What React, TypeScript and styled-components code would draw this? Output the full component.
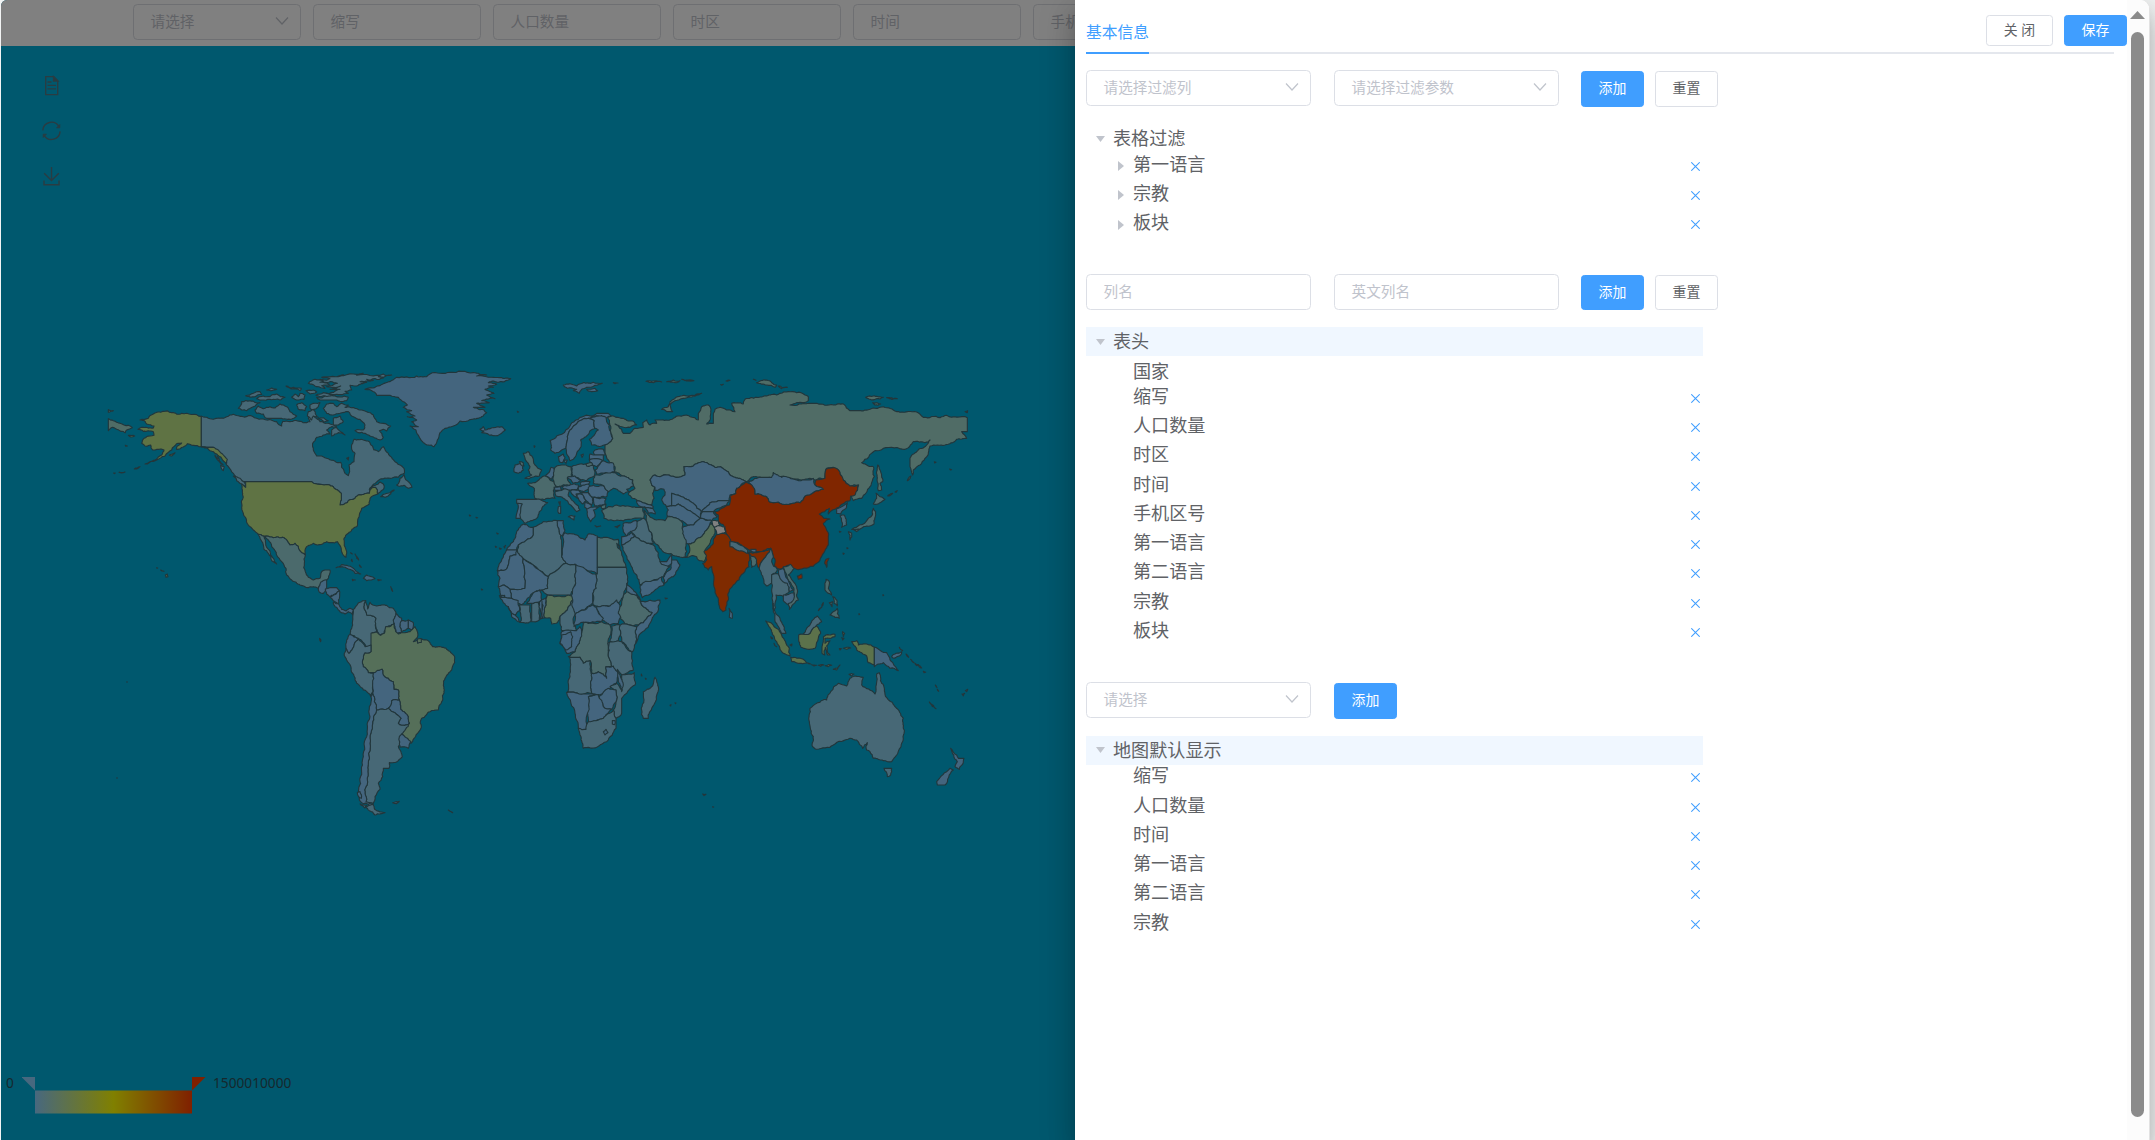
import React from "react";
import styled, { createGlobalStyle, css } from "styled-components";

const GlobalStyle = createGlobalStyle`
  * { box-sizing: border-box; }
  html, body { margin: 0; padding: 0; }
  body {
    background: #f7f7f7;
    overflow: hidden;
    font-family: "Noto Sans", "Noto Sans CJK SC", sans-serif;
  }
`;

const Page = styled.div`
  display: flex;
  width: 2155px;
  height: 1140px;
  padding-left: 1px;
  background: #f2f4f4;
  overflow: hidden;
`;

const MapSide = styled.main`
  display: flex;
  flex-direction: column;
  width: 1074px;
  height: 1140px;
  flex: none;
  background: #00586e;
  border-top-left-radius: 6px;
  overflow: hidden;
`;

const FilterBar = styled.div`
  display: flex;
  gap: 12px;
  height: 46px;
  flex: none;
  padding: 4px 0 0 132px;
  background: #808080;
`;

const Field = styled.div<{ $dim?: boolean; $w: number }>`
  display: flex;
  align-items: center;
  justify-content: space-between;
  flex: none;
  width: ${(p) => p.$w}px;
  height: 36px;
  padding: 0 11px 2px 16.5px;
  border: 1px solid ${(p) => (p.$dim ? "#6e6f72" : "#dcdfe6")};
  border-radius: 4.5px;
  background: ${(p) => (p.$dim ? "#808080" : "#fff")};
  color: ${(p) => (p.$dim ? "#606266" : "#bfc3cc")};
  font-size: 14.63px;
  line-height: 34px;
  white-space: nowrap;
`;

const Canvas = styled.div`
  position: relative;
  flex: 1;
`;

const Toolbox = styled.div`
  position: absolute;
  left: 40px;
  top: 28px;
  display: flex;
  flex-direction: column;
  gap: 23px;
  svg { display: block; }
`;

const WorldSvg = styled.svg`
  display: block;
`;

const Legend = styled.div`
  position: absolute;
  left: 5px;
  top: 1026px;
  display: flex;
  align-items: flex-start;
  color: #16282d;
  font-size: 13.7px;
  line-height: 21px;
`;

const LegendMin = styled.span`
  width: 16px;
`;
const LegendMax = styled.span`
  padding-left: 7px;
`;
const LegendScale = styled.svg`
  display: block;
  margin-top: 5px;
`;

const Drawer = styled.aside`
  display: flex;
  flex: none;
  width: 1075px;
  height: 1140px;
  background: #fff;
  border-right: 1px solid #e2e2e2;
  border-top-right-radius: 9px;
  box-shadow: 0 9px 11px -6px rgba(0, 0, 0, 0.2), 0 18px 27px 2px rgba(0, 0, 0, 0.14),
    0 7px 34px 6px rgba(0, 0, 0, 0.12);
  position: relative;
`;

const Content = styled.div`
  width: 1052px;
  flex: none;
  padding-left: 11px;
`;

const Head = styled.header`
  display: flex;
  justify-content: space-between;
  height: 52px;
`;

const Tab = styled.div`
  padding-top: 20px;
  color: #409eff;
  font-size: 15.75px;
  line-height: 24px;
`;

const HeadButtons = styled.div`
  display: flex;
  gap: 11px;
  padding-top: 15px;
`;

const TabLine = styled.div`
  width: 1028px;
  height: 2px;
  background: #e4e7ed;
`;
const TabActive = styled.div`
  width: 63px;
  height: 2px;
  background: #409eff;
`;

const Button = styled.button<{ $primary?: boolean; $h: number; $w?: number }>`
  display: flex;
  align-items: center;
  justify-content: center;
  width: ${(p) => p.$w ?? 63}px;
  height: ${(p) => p.$h}px;
  padding: 0 0 2px;
  border: 1px solid #dcdfe6;
  border-radius: 3.4px;
  background: #fff;
  color: #606266;
  font: 400 13.9px/20px "Noto Sans", "Noto Sans CJK SC", sans-serif;
  ${(p) =>
    p.$primary &&
    css`
      border-color: #409eff;
      background: #409eff;
      color: #fff;
    `}
`;

const Form = styled.div<{ $top: number }>`
  display: flex;
  align-items: flex-start;
  gap: 23px;
  padding-top: ${(p) => p.$top}px;
`;

const Actions = styled.div<{ $flush?: boolean }>`
  display: flex;
  gap: 11px;
  padding-top: 1px;
  margin-left: ${(p) => (p.$flush ? 0 : -1)}px;
`;

const Tree = styled.div`
  width: 617px;
  padding-top: 17px;
`;

const Row = styled.div<{ $active?: boolean; $child?: boolean; $removable?: boolean }>`
  display: flex;
  align-items: center;
  height: 29.25px;
  padding: 0 3px ${(p) => (p.$removable ? 3.5 : 0)}px ${(p) => (p.$child ? 25 : 4)}px;
  background: ${(p) => (p.$active ? "#f0f7ff" : "transparent")};
`;

const Toggle = styled.span<{ $pad: number }>`
  display: flex;
  align-items: center;
  justify-content: center;
  width: 20px;
  height: 12px;
  flex: none;
  margin-right: ${(p) => p.$pad}px;
`;

const Label = styled.span<{ $raised?: boolean }>`
  flex: 1;
  padding-bottom: ${(p) => (p.$raised ? 5 : 0.5)}px;
  color: #606266;
  font-size: 18.1px;
  line-height: 24px;
  white-space: nowrap;
`;

const ScrollTrack = styled.div`
  display: flex;
  flex-direction: column;
  align-items: center;
  width: 22px;
  padding: 11px 1px 0 0;
  background: #fcfcfc;
  border-top-right-radius: 9px;
`;

const ScrollThumb = styled.div`
  width: 13px;
  height: 1085px;
  margin-top: 13px;
  border-radius: 7px;
  background: #8b8b8b;
`;

const Chevron = ({ color }: { color: string }) => (
  <svg width="14" height="10" viewBox="0 0 14 10" fill="none" stroke={color} strokeWidth="1.2">
    <path d="M1 1.5 7 8 13 1.5" />
  </svg>
);

const CaretDown = () => (
  <svg width="9" height="6" viewBox="0 0 9 6">
    <path d="M0 0h9L4.5 6z" fill="#c0c4cc" />
  </svg>
);
const CaretRight = () => (
  <svg width="6" height="10" viewBox="0 0 6 10">
    <path d="M0 0v10L6 5z" fill="#c0c4cc" />
  </svg>
);
const Cross = () => (
  <svg width="9" height="9" viewBox="0 0 9 9" stroke="#409eff" strokeWidth="1.05">
    <path d="M0.3 0.3 8.7 8.7M8.7 0.3 0.3 8.7" />
  </svg>
);

type Shape = [string, string];

const C = {
  low: "#44657e",
  mid: "#476876",
  high: "#4b6a6c",
  ru: "#506c66",
  us: "#5f7344",
  br: "#556f59",
  id: "#5c724b",
  cn: "#802600",
  in: "#7f2b00",
  none: "#808080",
};

const AMERICA_NORTH: Shape[] = [
  [C.us, "304,199 304,290 280,286 262,281 250,291 230,298 232,288 245,279 230,281 215,300 195,318 170,330 150,335 185,315 192,300 175,298 158,300 152,285 135,288 125,280 132,265 150,258 162,256 160,245 130,244 114,238 130,232 160,234 162,228 140,222 135,214 120,210 145,205 160,192 190,184 215,188 245,190"],
  [C.ru, "25,206 40,212 60,220 72,225 85,226 97,233 80,240 76,248 62,244 50,238 38,232 25,242"],
  [C.ru, "25,179 40,182 25,187"],
  [C.mid, "304,199 325,205 345,206 360,205 380,200 400,193 420,199 445,197 470,205 500,210 530,215 545,228 548,214 570,215 600,214 620,218 630,215 625,205 635,195 650,205 660,215 675,220 690,222 710,228 695,230 680,240 690,252 670,255 650,262 638,280 640,300 650,318 665,318 685,326 705,334 722,337 725,352 735,370 745,377 749,365 747,345 762,335 765,310 755,298 758,280 762,268 790,270 808,275 822,300 835,305 850,290 865,310 885,335 905,348 912,355 913,370 895,382 870,385 840,388 820,403 808,418 826,406 840,396 850,402 852,415 842,425 833,432 826,412 815,414 808,430 780,434 765,445 748,450 735,460 720,465 724,450 724,430 700,410 685,404 660,403 635,395 437,395 425,392 415,385 400,370 385,350 370,325 355,305 340,292 320,292 304,290"],
  [C.us, "304,290 320,292 340,292 355,300 370,315 382,328 380,340 365,325 350,312 330,302"],
  [C.mid, "345,315 358,330 352,318 370,345 362,340"],
  [C.mid, "362,346 373,350 370,362 364,355"],
  [C.mid, "842,440 855,432 870,428 883,420 872,432 855,442"],
  [C.mid, "890,405 900,385 912,374 915,385 930,400 936,412 925,415 912,406 895,408"],
  [C.mid, "400,378 415,383 430,395 437,408 425,402 410,392"],
  [C.us, "425,402 437,412 437,395 635,395 660,403 685,404 700,410 724,430 724,450 720,465 735,460 748,450 765,445 780,434 808,430 815,414 826,412 833,432 810,445 808,462 785,475 778,495 773,515 770,530 745,550 732,565 733,580 740,605 738,622 728,612 722,590 712,575 695,578 680,575 665,583 640,580 620,590 616,615 605,608 595,590 585,580 570,585 560,570 548,562 520,563 500,558 475,553 460,540 445,525 438,505 428,485 425,460 428,430"],
  [C.high, "475,553 500,558 520,563 548,562 560,570 570,585 585,580 595,590 605,608 616,615 613,640 616,665 625,682 640,690 660,685 665,665 675,660 690,660 688,675 680,690 665,697 655,715 640,710 625,713 600,705 575,690 560,675 558,655 545,635 530,615 515,590 505,570 492,560 497,580 507,600 520,625 530,642 515,632 505,610 492,598 490,585 483,570"],
  [C.low, "655,715 662,697 680,690 680,712 670,730 657,725"],
  [C.low, "676,718 690,713 710,713 718,722 700,735 690,740 680,732"],
  [C.low, "690,740 718,722 716,760 700,752"],
  [C.low, "700,757 716,762 725,778 738,783 750,775 760,780 758,795 745,785 735,792 718,782 705,770"],
  [C.low, "708,653 725,644 745,648 765,660 782,672 765,670 745,657 725,650"],
  [C.low, "790,685 800,675 815,680 825,686 810,690 800,692"],
  [C.low, "757,688 766,690 758,692"],
  [C.low, "833,689 844,690 835,692"],
  [C.low, "752,608 757,612 753,610"],
  [C.low, "765,612 776,630 770,625"],
  [C.low, "755,628 757,635 754,632"],
  [C.low, "778,645 784,652 780,650"],
  [C.low, "872,710 878,724 874,716"],
  [C.mid, "760,780 780,757 797,752 792,770 800,795 828,805 830,845 817,848 815,895 800,890 775,865 750,855 758,825"],
  [C.mid, "797,752 803,777 810,757 830,768 860,766 880,775 888,790 880,810 882,822 862,830 852,850 838,857 832,845 828,805 800,795 792,770"],
  [C.low, "888,790 905,805 900,830 905,845 890,850 885,830 880,810"],
  [C.low, "905,812 925,810 925,835 905,845 900,830"],
  [C.low, "925,810 940,818 935,840 925,835"],
  [C.mid, "415,175 425,155 450,152 480,158 460,170 440,182 425,180"],
  [C.mid, "465,180 475,168 490,176 510,170 525,174 540,162 560,170 570,185 590,198 575,207 540,205 500,205 490,192 470,190"],
  [C.mid, "470,146 490,138 510,140 530,132 555,142 540,150 510,148 485,150"],
  [C.mid, "437,137 460,130 480,125 485,133 465,140"],
  [C.mid, "500,120 515,114 530,118 515,122"],
  [C.mid, "558,108 580,112 604,115 600,122 575,117"],
  [C.mid, "575,142 585,132 595,140 600,130 615,135 612,148 595,150"],
  [C.mid, "590,165 605,158 620,170 615,182 595,178"],
  [C.mid, "630,165 660,158 655,170 640,180 630,175"],
  [C.mid, "650,142 690,137 720,141 745,142 740,152 700,150 660,150"],
  [C.mid, "618,122 640,120 650,126 630,132"],
  [C.mid, "648,136 670,128 700,130 692,137"],
  [C.mid, "660,88 690,86 665,82 730,74 710,80 790,70 770,76 850,72 875,75 835,80 850,84 800,88 820,91 780,95 800,97 770,108 750,106 755,120 735,124 745,130 720,134 680,130 720,118 690,118 722,108 680,110 712,100 670,95"],
  [C.mid, "625,100 645,88 670,92 660,97 688,103 665,107 675,115 650,110 640,104"],
  [C.mid, "670,175 680,162 700,160 710,170 725,160 745,165 735,172 765,175 780,180 800,185 820,195 830,215 850,220 872,228 860,243 850,238 838,242 850,262 840,270 810,258 795,250 775,248 765,242 790,240 795,225 780,208 760,200 745,185 720,190 700,195 680,190"],
  [C.mid, "700,205 720,198 730,215 715,225 700,225"],
  [C.mid, "695,240 710,232 735,255 715,248 695,258"],
  [C.mid, "625,185 640,178 648,195 655,202 640,198 635,210 622,198"],
  [C.mid, "655,205 670,203 685,212 672,216"],
  [C.mid, "740,325 746,322 745,330"],
  [C.us, "196,675 202,672 204,680 198,682"],
  [C.us, "170,653 173,654 171,655"],
  [C.us, "182,660 192,664 186,663"],
  [C.us, "135,342 150,336 142,342"],
  [C.us, "103,357 120,350 110,357"],
  [C.us, "57,367 75,366 64,369"],
  [C.us, "41,369 46,369 43,371"],
  [C.us, "208,315 225,308 215,318"],
  [C.us, "85,256 104,258 92,261"],
  [C.us, "76,286 82,288 78,289"],
  [C.br, "659,865 663,870 662,875"],
];

const AMERICA_SOUTH: Shape[] = [
  [C.low, "105,118 150,107 180,95 200,82 260,78 290,80 300,72 360,67 430,68 470,75 440,78 510,83 542,86 510,95 475,98 500,103 475,108 490,112 465,118 492,130 470,135 495,146 455,152 478,158 440,160 465,172 430,172 462,180 470,188 445,205 415,212 390,213 370,228 345,235 330,248 322,270 312,290 295,285 280,278 268,262 258,240 240,228 265,230 245,215 260,210 232,200 255,198 230,185 245,182 220,172 232,165 205,142 180,136 140,136 130,125"],
  [C.low, "450,238 460,230 465,240 475,236 490,233 515,230 526,240 515,250 490,257 468,250 455,248 462,243"],
  [C.low, "700,105 720,101 740,108 760,98 790,97 817,100 795,106 770,112 755,118 748,130 730,122 740,118 712,115"],
  [C.low, "770,118 795,115 803,122 785,125"],
  [C.br, "123,850 140,846 152,856 163,850 167,830 180,830 193,820 197,845 205,852 225,848 240,845 255,830 263,848 262,862 250,875 270,868 300,878 308,890 340,892 365,910 373,918 374,938 365,960 345,985 343,1020 335,1055 325,1080 300,1085 275,1105 273,1135 258,1155 243,1180 235,1170 215,1152 225,1135 238,1120 235,1100 212,1078 208,1050 205,1020 192,1018 190,995 160,975 157,958 135,968 115,968 100,950 98,930 105,908 123,905"],
  [C.br, "262,867 274,866 274,877 263,880"],
  [C.low, "60,853 85,868 68,895 57,910 48,895 50,870"],
  [C.mid, "48,895 57,910 68,895 85,868 105,890 123,885 123,905 105,908 98,930 100,950 115,968 130,970 128,1010 123,1040 100,1020 80,1000 68,970 50,930 43,910"],
  [C.low, "130,970 157,958 160,975 190,995 192,1018 205,1020 208,1050 185,1052 175,1075 150,1078 140,1080 133,1055 128,1030"],
  [C.low, "185,1052 208,1050 212,1078 235,1100 238,1120 225,1126 205,1120 213,1105 175,1075"],
  [C.mid, "140,1080 150,1078 175,1075 213,1105 205,1120 225,1126 238,1120 215,1152 208,1165 205,1190 213,1205 217,1220 205,1232 178,1238 177,1255 160,1255 158,1280 145,1300 150,1318 135,1340 130,1360 108,1355 105,1330 112,1290 115,1240 120,1180 128,1120"],
  [C.low, "208,1160 215,1153 243,1175 235,1195 210,1192"],
  [C.low, "123,1040 128,1030 133,1055 140,1080 128,1120 120,1180 115,1240 112,1290 105,1330 108,1355 130,1362 120,1368 95,1358 88,1350 85,1325 92,1300 95,1270 100,1220 110,1160 120,1100"],
  [C.low, "82,1328 90,1325 94,1345 86,1340"],
  [C.low, "90,1362 110,1366 104,1374"],
  [C.mid, "105,1372 128,1362 134,1378 150,1386 165,1388 135,1395 118,1382"],
  [C.low, "188,1358 208,1354 200,1361"],
  [C.low, "355,1380 368,1388 360,1384"],
  [C.low, "562,184 566,186 563,187"],
  [C.low, "850,98 864,99 855,101"],
  [C.low, "418,495 422,497 419,498"],
  [C.low, "438,502 443,503 440,504"],
  [C.low, "496,589 500,591 497,592"],
  [C.low, "508,594 514,596 510,598"],
  [C.low, "522,590 527,586 524,594"],
  [C.low, "500,549 505,551 502,552"],
  [C.low, "454,717 458,719 455,720"],
  [C.low, "612,287 615,289 613,292"],
];

const EURASIA_AFRICA: Shape[] = [
  [C.ru, "382,140 400,138 430,145 462,155 470,165 450,172 425,170 405,162 425,178 430,190 450,190 465,175 490,172 488,158 500,150 510,165 530,160 525,150 545,150 580,145 600,138 630,140 655,150 655,130 665,110 685,105 693,120 690,150 680,162 700,160 700,130 705,118 720,112 740,120 765,125 755,100 790,102 795,88 830,82 860,78 890,75 900,70 925,65 950,68 975,75 985,80 985,92 960,97 930,105 985,100 1010,100 1060,105 1090,102 1110,122 1130,122 1170,118 1200,112 1240,120 1260,127 1310,126 1330,142 1380,143 1400,136 1462,143 1462,185 1445,185 1460,205 1430,208 1395,225 1350,228 1345,248 1335,265 1320,285 1300,300 1298,315 1290,290 1290,265 1310,245 1340,225 1350,210 1335,218 1300,215 1275,238 1210,235 1185,242 1145,278 1165,288 1180,290 1183,320 1170,350 1145,385 1120,392 1115,375 1125,372 1135,345 1110,348 1090,330 1075,300 1060,292 1040,295 1035,325 1005,330 990,325 965,330 935,325 895,322 880,308 880,322 850,325 820,320 800,335 780,325 765,322 750,315 722,290 705,292 670,275 640,288 612,290 615,315 590,322 560,315 540,320 525,315 510,330 515,345 525,352 518,370 522,385 515,405 490,398 470,390 445,372 465,355 458,330 430,318 402,305 405,290 385,270 375,250 375,225 385,220 398,205 390,165"],
  [C.ru, "545,118 565,110 570,95 585,85 620,78 665,70 650,76 610,85 585,92 570,105 578,125 560,125"],
  [C.ru, "498,34 520,33 545,36 520,38"],
  [C.ru, "560,35 580,30 600,32 585,38"],
  [C.ru, "605,28 625,30 642,32 620,33"],
  [C.low, "210,212 230,198 250,190 270,168 285,152 300,142 330,138 350,130 385,130 393,137 380,143 350,137 330,145 305,150 285,165 270,180 262,200 258,235 245,240 225,250 212,240"],
  [C.low, "258,235 262,200 270,180 285,165 305,150 325,145 343,152 345,175 330,182 318,200 302,210 300,235 290,250 280,268 270,272 262,255"],
  [C.low, "325,145 350,138 378,142 388,165 392,185 398,205 385,220 365,228 335,225 328,208 345,192 355,180 345,175 343,152"],
  [C.low, "235,260 250,252 255,262 248,278 238,275"],
  [C.low, "252,272 262,270 258,280"],
  [C.low, "303,255 310,252 306,262"],
  [C.low, "510,330 525,315 540,320 560,315 590,322 615,315 612,290 640,288 670,275 705,292 722,290 750,315 765,322 780,325 800,335 770,355 768,370 750,375 748,392 715,392 690,398 680,410 665,425 640,400 600,378 575,370 575,408 560,410 545,390 555,375 552,358 525,362 525,352 515,345"],
  [C.low, "575,408 575,370 600,378 640,400 665,425 660,445 640,430 610,410 595,402"],
  [C.low, "560,410 575,408 595,402 610,410 640,430 660,445 640,465 622,465 590,445 562,438 565,420"],
  [C.low, "680,410 690,398 715,392 748,392 740,405 715,415 700,425 665,425"],
  [C.low, "660,445 668,425 700,425 712,440 695,452 665,445"],
  [C.low, "610,470 640,465 660,445 695,452 680,480 665,500 640,518 625,522 612,520"],
  [C.br, "625,522 640,518 665,500 680,480 693,460 705,470 705,490 690,520 675,540 680,560 672,575 655,570 650,560 615,562 628,548"],
  [C.high, "492,420 505,435 530,450 555,452 562,440 590,445 608,460 612,500 620,545 615,562 585,558 560,550 545,540 525,520 515,490 500,455"],
  [C.high, "365,422 385,410 410,405 440,408 470,412 488,412 492,445 450,448 430,453 400,452 372,445"],
  [C.high, "362,405 378,402 376,414 364,415"],
  [C.low, "470,392 495,400 520,410 518,415 490,412 475,405"],
  [C.low, "490,412 518,415 526,432 505,430"],
  [C.mid, "470,455 492,445 500,455 515,490 520,520 500,520 465,498 452,485 468,475"],
  [C.low, "430,460 470,452 468,475 440,498 432,488"],
  [C.low, "425,500 440,498 455,488 465,498 445,515 425,525"],
  [C.mid, "425,525 445,515 465,498 500,520 520,525 535,550 545,580 570,590 550,620 520,630 480,645 470,615 450,580"],
  [C.low, "480,650 490,638 545,622 552,645 520,665 487,683"],
  [C.low, "575,570 590,570 600,585 580,620 552,642 550,622 570,600"],
  [C.low, "540,575 560,575 575,555 575,580 565,588 545,583"],
  [C.high, "143,340 165,338 180,325 197,318 225,335 228,350 220,362 225,385 195,388 165,385 163,355"],
  [C.mid, "110,388 165,388 203,398 178,425 170,445 135,460 120,445 125,405 110,400"],
  [C.low, "112,400 127,402 122,445 108,445"],
  [C.low, "197,318 213,292 222,295 220,318 215,328"],
  [C.high, "228,290 245,285 272,290 275,320 262,325 272,345 230,350 220,320"],
  [C.mid, "275,290 300,282 340,285 343,318 320,332 278,318"],
  [C.low, "262,322 285,318 303,332 280,340"],
  [C.low, "245,350 280,342 297,345 292,358 262,360"],
  [C.low, "222,352 240,348 245,358 225,362"],
  [C.mid, "225,365 250,358 270,362 265,378 285,400 300,420 290,425 275,408 250,385 228,378"],
  [C.mid, "265,440 285,438 282,450"],
  [C.mid, "235,410 242,408 242,430 236,430"],
  [C.low, "236,396 241,395 240,405"],
  [C.low, "300,338 330,335 325,345 303,347"],
  [C.low, "295,350 325,342 332,352 310,365 295,360"],
  [C.low, "325,352 340,345 372,348 385,365 380,380 340,382 325,368"],
  [C.low, "340,382 378,385 375,402 345,408"],
  [C.low, "272,362 295,360 305,368 288,372 300,390 282,378"],
  [C.low, "305,368 325,368 338,385 335,405 318,392"],
  [C.low, "290,372 308,374 318,392 308,402 296,388"],
  [C.low, "315,395 335,408 322,420 314,412"],
  [C.low, "320,418 345,410 365,408 340,420 345,440 332,455 322,435"],
  [C.low, "345,467 362,468 350,471"],
  [C.low, "405,470 420,465 412,473"],
  [C.mid, "345,315 400,308 430,318 458,330 460,348 440,358 448,365 430,372 415,362 400,355 385,365 372,348 340,340"],
  [C.low, "345,300 368,272 400,280 405,305 350,312"],
  [C.low, "345,240 370,238 375,255 345,255 340,246"],
  [C.low, "330,252 345,255 370,255 370,270 345,266 328,268"],
  [C.low, "328,270 345,266 368,272 350,290 330,282"],
  [C.high, "318,282 335,278 338,286 320,288"],
  [C.high, "130,250 145,245 158,262 165,285 185,300 178,318 135,325 155,315 145,300 150,290 140,275"],
  [C.low, "105,285 128,280 130,300 115,310 102,305"],
  [C.high, "118,275 130,278 132,288 122,284"],
  [C.low, "130,462 160,472 160,495 115,525 110,540 80,540 105,505 110,485"],
  [C.low, "80,540 110,540 108,555 90,558 85,585 75,600 52,602 65,570"],
  [C.low, "52,602 75,600 85,585 90,558 108,555 110,542 130,565 135,655 90,658 72,645 55,650 60,625"],
  [C.mid, "160,472 190,455 232,452 238,480 245,510 245,560 258,580 205,620 130,568 112,540 115,525 160,495"],
  [C.low, "232,452 250,452 255,480 248,500 238,490"],
  [C.low, "248,500 255,488 290,495 315,510 325,492 352,498 352,612 285,583 258,580 245,560"],
  [C.high, "352,502 390,505 415,508 420,535 410,520 425,550 438,592 352,592"],
  [C.mid, "352,592 438,592 442,640 430,680 410,700 390,708 355,710 340,705 338,670 348,655 347,612 352,612"],
  [C.low, "350,710 390,708 410,690 425,735 415,760 390,765 365,750"],
  [C.low, "130,565 205,620 203,655 170,662 150,680 125,705 95,685 90,658 135,655"],
  [C.mid, "205,620 258,580 285,583 287,640 272,675 205,675 190,665 178,660 203,655"],
  [C.low, "285,583 347,612 348,655 338,670 338,700 315,720 285,735 272,700 275,675 287,640"],
  [C.br, "202,675 245,680 275,678 278,690 262,720 240,740 232,758 215,762 212,745 194,743 198,705"],
  [C.mid, "278,690 285,735 280,760 290,782 245,782 240,760 240,740 262,720"],
  [C.low, "285,735 315,720 338,705 350,715 370,745 365,755 310,757 282,770"],
  [C.high, "440,665 460,663 480,690 490,710 517,728 490,758 460,768 435,762 415,730 425,700"],
  [C.low, "440,640 455,655 482,690 470,675 440,665"],
  [C.low, "480,695 540,690 535,720 510,760 475,800 467,820 470,770 490,758 517,728 490,710"],
  [C.mid, "420,765 435,762 460,768 470,770 467,820 458,845 425,815 422,790"],
  [C.mid, "395,768 420,765 422,790 415,812 390,815"],
  [C.high, "310,757 340,760 365,755 390,765 393,785 385,820 385,850 395,890 378,890 380,925 355,905 335,910 330,872 310,880 300,862 265,860 285,845 300,810"],
  [C.low, "245,785 290,782 300,770 305,785 300,810 285,845 260,850 240,820"],
  [C.low, "245,795 272,785 278,800 275,830 258,840 240,820"],
  [C.low, "383,820 392,818 392,840 385,842"],
  [C.mid, "390,815 415,812 425,815 455,845 460,900 425,915 395,890 385,850"],
  [C.mid, "268,862 300,862 310,880 330,872 333,910 345,912 332,935 335,970 310,972 260,968 270,920"],
  [C.low, "335,910 355,905 380,925 378,890 400,888 412,905 408,940 365,972 335,970 332,935"],
  [C.mid, "425,915 463,908 465,945 425,985 425,1030 408,1045 400,1020 410,990 408,960 390,950 410,940 425,960"],
  [C.low, "412,898 420,915 430,945 425,965 415,935"],
  [C.low, "358,978 385,955 408,960 410,990 395,1018 370,1010"],
  [C.low, "325,980 355,975 370,1010 395,1018 370,1045 325,1060 320,1025"],
  [C.low, "260,968 310,972 345,972 325,980 318,1080 295,1075 285,1030"],
  [C.mid, "295,1075 318,1078 325,1055 370,1045 400,1020 408,1045 408,1075 380,1115 350,1132 310,1135 303,1100"],
  [C.low, "370,1085 378,1078 384,1088 375,1095"],
  [C.low, "397,1052 405,1052 404,1064 397,1062"],
  [C.mid, "525,922 535,950 518,1010 505,1045 490,1045 485,1020 492,990 490,965 515,950"],
  [C.low, "55,650 72,645 90,658 95,685 60,680"],
  [C.low, "58,677 74,676 74,681"],
  [C.low, "60,682 95,685 115,692 118,722 105,735 85,710"],
  [C.low, "85,710 105,735 120,757 95,740"],
  [C.mid, "118,705 150,705 152,755 120,757"],
  [C.low, "140,700 165,665 178,660 185,690 170,700"],
  [C.mid, "155,702 175,698 178,750 155,755"],
  [C.low, "178,698 200,680 198,705 194,743 180,748"],
  [C.low, "186,694 188,745 186,745"],
  [C.low, "555,684 562,685 557,687"],
  [C.low, "484,912 486,918 484,917"],
  [C.low, "496,925 499,927 497,928"],
  [C.low, "570,1006 573,1004 572,1008"],
  [C.low, "585,998 588,999 586,1001"],
];

const ASIA_PACIFIC: Shape[] = [
  [C.ru, "170,38 200,30 215,38 230,45 225,52 200,45"],
  [C.ru, "235,48 262,52 245,56"],
  [C.ru, "497,82 520,78 550,82 530,86 510,88"],
  [C.ru, "560,83 592,86 575,88"],
  [C.ru, "518,98 542,102 525,105"],
  [C.ru, "795,125 803,122 802,128"],
  [C.ru, "533,285 540,300 548,335 540,340 545,360 535,362 532,335 530,305"],
  [C.cn, "43,425 88,405 90,378 108,370 110,355 138,335 165,350 165,372 200,380 208,395 260,403 300,398 315,378 370,358 345,345 348,330 375,325 378,298 400,293 415,300 430,330 450,348 476,345 465,375 452,378 450,392 405,418 385,432 388,415 358,432 372,445 390,447 370,460 378,475 385,500 385,525 365,560 350,580 300,598 280,595 268,585 240,598 225,590 220,560 212,535 185,545 160,545 140,535 95,515 78,490 75,475 55,455 55,435"],
  [C.cn, "292,618 305,612 306,625 295,628"],
  [C.cn, "378,568 387,565 380,592 374,580"],
  [C.in, "60,490 78,492 92,510 90,525 145,548 150,560 147,590 130,610 100,645 88,660 85,690 78,720 68,725 55,695 42,650 35,590 25,600 8,580 20,570 12,545 40,520 48,495"],
  [C.in, "147,545 170,548 212,535 200,555 185,575 178,595 168,570 150,565"],
  [C.none, "35,455 55,452 60,465 55,470 43,472"],
  [C.none, "43,472 60,468 75,470 78,488 50,492"],
  [C.low, "145,335 185,322 215,322 220,308 245,322 290,330 340,325 345,345 370,358 315,378 300,398 260,403 208,395 200,380 165,372 160,352"],
  [C.mid, "90,515 115,522 143,540 143,550 110,540 90,530"],
  [C.low, "152,538 168,538 168,546 153,545"],
  [C.high, "148,555 165,562 170,580 155,592"],
  [C.mid, "212,535 220,560 215,575 232,598 215,615 215,640 200,648 192,640 178,598 185,575 200,555"],
  [C.mid, "215,615 235,612 265,640 268,665 250,680 228,675 225,700 222,725 217,690 215,640"],
  [C.low, "235,600 250,595 280,660 268,665 262,640 240,625"],
  [C.high, "250,590 270,583 282,595 265,615 290,650 295,690 268,718 265,702 282,680 275,645"],
  [C.low, "250,675 282,668 280,690 262,703 250,692"],
  [C.mid, "220,700 225,725 240,745 258,790 245,790 232,765 220,725"],
  [C.id, "197,753 215,760 245,795 268,835 270,858 250,850 230,815 215,785"],
  [C.id, "272,862 310,868 332,882 300,880 275,875"],
  [C.id, "296,795 310,792 330,790 348,765 362,790 345,835 330,838 303,832"],
  [C.mid, "310,792 330,765 352,738 365,755 348,768 330,790"],
  [C.id, "370,800 405,793 405,800 375,805 375,820 390,812 380,828 390,855 383,855 376,832 374,855 366,850 366,830"],
  [C.id, "335,884 350,886 342,888"],
  [C.id, "355,886 372,885 362,889"],
  [C.id, "376,887 395,886 385,890"],
  [C.id, "400,898 420,885 410,900"],
  [C.id, "428,785 434,790 430,800"],
  [C.id, "425,803 432,805 428,810"],
  [C.id, "430,835 452,834 440,838"],
  [C.id, "418,836 424,836 420,840"],
  [C.id, "270,825 276,822 275,828"],
  [C.id, "212,800 218,806 214,806"],
  [C.id, "222,820 230,830 224,826"],
  [C.high, "378,628 388,635 385,655 395,675 375,660 375,645"],
  [C.high, "400,725 412,715 418,745 405,742 390,735"],
  [C.high, "388,698 398,695 396,710"],
  [C.high, "398,680 410,690 412,708 402,700"],
  [C.high, "355,722 370,698 365,712"],
  [C.id, "455,815 470,812 475,825 500,822 523,832 523,885 505,878 500,858 470,840 462,826"],
  [C.low, "523,832 560,848 570,870 595,902 570,895 550,878 523,890"],
  [C.low, "575,860 605,845 602,855 582,865"],
  [C.low, "598,832 608,842 604,840"],
  [C.low, "618,852 626,862 621,858"],
  [C.low, "632,868 642,878 636,874"],
  [C.low, "645,880 655,884 650,887"],
  [C.low, "655,885 665,894 660,893"],
  [C.low, "670,904 677,907 672,908"],
  [C.low, "706,945 711,953 708,950"],
  [C.low, "712,958 716,964 713,962"],
  [C.low, "688,996 698,1005 708,1016 696,1008"],
  [C.low, "786,972 794,970 790,978"],
  [C.low, "796,962 803,958 800,965"],
  [C.low, "447,913 462,912 455,918"],
  [C.mid, "330,1015 350,1000 380,990 392,965 415,940 440,948 450,925 465,918 490,922 485,945 525,972 530,912 538,908 545,940 553,955 562,985 585,1010 610,1045 613,1080 605,1120 590,1155 575,1175 550,1172 520,1165 510,1145 500,1140 502,1118 488,1135 470,1110 450,1105 400,1125 350,1138 338,1130 340,1100 328,1055"],
  [C.mid, "552,1195 575,1195 572,1215 562,1220"],
  [C.low, "752,1135 770,1155 775,1165 792,1165 778,1198 765,1190 772,1175"],
  [C.low, "750,1195 760,1200 735,1245 712,1245 710,1235"],
  [C.high, "520,415 527,425 522,462 500,468 470,478 455,478 490,462 505,445 518,432"],
  [C.high, "445,485 455,490 450,510"],
  [C.high, "462,480 478,478 470,485"],
  [C.high, "528,370 540,380 555,388 540,398 520,402 530,385"],
  [C.high, "563,378 578,370 570,377"],
  [C.high, "585,366 592,362 588,367"],
  [C.low, "410,415 442,398 438,415 422,432 410,430"],
  [C.mid, "420,438 432,435 440,465 425,472"],
  [C.low, "87,715 97,730 97,745 88,742"],
  [C.low, "8,1272 18,1273 12,1277"],
  [C.low, "38,1310 41,1311 39,1312"],
  [C.low, "549,674 551,676 549,677"],
  [C.low, "477,731 479,733 477,734"],
  [C.high, "429,549 433,551 430,553"],
  [C.high, "441,533 444,535 441,536"],
  [C.high, "418,484 423,485 419,487"],
  [C.ru, "703,275 708,277 704,279"],
  [C.ru, "749,297 755,299 751,300"],
  [C.ru, "622,332 633,318 626,330"],
  [C.ru, "166,30 160,28 168,31"],
  [C.ru, "62,44 70,43 65,46"],
  [C.ru, "78,33 90,31 82,34"],
];

const noise = (a: number, b: number) => {
  const v = Math.sin(a * 12.9898 + b * 78.233) * 43758.5453;
  return v - Math.floor(v) - 0.5;
};

type Pt = [number, number];

/* Splits an edge into small irregular steps; the offset depends only on the
   edge's end points, so a border shared by two countries stays shared. */
const splitEdge = (a: Pt, b: Pt, depth: number): Pt[] => {
  const dx = b[0] - a[0];
  const dy = b[1] - a[1];
  const len = Math.hypot(dx, dy);
  if (depth === 0 || len < 7 || dx === 0 || dy === 0) return [a];
  const flip = a[0] < b[0] || (a[0] === b[0] && a[1] < b[1]) ? 1 : -1;
  const n = noise(a[0] + b[0], a[1] + b[1]) * Math.min(len * 0.28, 7) * flip;
  const m: Pt = [(a[0] + b[0]) / 2 - (dy / len) * n, (a[1] + b[1]) / 2 + (dx / len) * n];
  return [...splitEdge(a, m, depth - 1), ...splitEdge(m, b, depth - 1)];
};

const outline = (src: string) => {
  const pts = src.split(" ").map((p) => p.split(",").map(Number) as Pt);
  return pts
    .flatMap((p, i) => splitEdge(p, pts[(i + 1) % pts.length], 3))
    .map(([x, y]) => `${x.toFixed(1)},${y.toFixed(1)}`)
    .join(" ");
};

const Region = ({ x, y, shapes }: { x: number; y: number; shapes: Shape[] }) => (
  <g transform={`translate(${x} ${y}) scale(0.33333)`}>
    {shapes.map(([fill, pts], i) => (
      <polygon key={i} points={outline(pts)} fill={fill} />
    ))}
  </g>
);

const World = () => (
  <WorldSvg width="1074" height="1094" viewBox="1 46 1074 1094">
    <g stroke="#22363b" strokeWidth="3.3" strokeLinejoin="round">
      <Region x={480} y={370} shapes={EURASIA_AFRICA} />
      <Region x={700} y={370} shapes={ASIA_PACIFIC} />
      <Region x={100} y={350} shapes={AMERICA_NORTH} />
      <Region x={330} y={350} shapes={AMERICA_SOUTH} />
    </g>
    <g fill="#22363b">
      <circle cx="127" cy="682" r="0.8" />
      <circle cx="117" cy="778" r="0.8" />
    </g>
  </WorldSvg>
);

const Tools = () => (
  <Toolbox>
    <svg width="22" height="23" viewBox="0 0 22 23" fill="none" stroke="#2a3c42" strokeWidth="1.3">
      <path d="M4.7 2.7h8l4 4v14h-12zM6.5 8h4M6.5 11.3h8.5M6.5 14.9h8.5" />
      <path d="M12.5 2.5v4.5h4.5z" fill="#2a3c42" />
    </svg>
    <svg width="22" height="23" viewBox="0 0 22 23" fill="none" stroke="#2a3c42" strokeWidth="1.4">
      <path d="M1.8 10.4A8.7 8.7 0 0 1 17.9 6.4M19.1 11.4a8.7 8.7 0 0 1-15.9 4.2" />
      <path d="M18.8 4.6v3.2h-3.2zM2.2 17.4v-3.2h3.2z" fill="#2a3c42" strokeWidth="0.8" />
    </svg>
    <svg width="22" height="23" viewBox="0 0 22 23" fill="none" stroke="#2a3c42" strokeWidth="1.4">
      <path d="M10.5 1v14M3.2 7.3l7.3 7.3 7.3-7.3M3 14.5v4.2h15v-4.2" />
    </svg>
  </Toolbox>
);

const LegendBar = () => (
  <LegendScale width="184" height="37" viewBox="22 1077 184 37">
    <defs>
      <linearGradient id="ramp">
        <stop offset="0" stopColor="#47687f" />
        <stop offset="0.5" stopColor="#808000" />
        <stop offset="1" stopColor="#802000" />
      </linearGradient>
    </defs>
    <path d="M21.5 1077H35v13.5z" fill="#47687f" />
    <path d="M192 1077h13.5L192 1090.5z" fill="#802000" />
    <rect x="35" y="1090.5" width="157" height="23" fill="url(#ramp)" />
  </LegendScale>
);

type Node = { text: string; fixed?: boolean };

const TreeView = ({
  title,
  active,
  expandable,
  nodes,
}: {
  title: string;
  active?: boolean;
  expandable?: boolean;
  nodes: Node[];
}) => (
  <Tree>
    <Row $active={active}>
      <Toggle $pad={3}>
        <CaretDown />
      </Toggle>
      <Label>{title}</Label>
    </Row>
    {nodes.map((n) => (
      <Row key={n.text} $child $removable={!n.fixed}>
        <Toggle $pad={2}>{expandable && <CaretRight />}</Toggle>
        <Label $raised={!n.fixed}>{n.text}</Label>
        {!n.fixed && <Cross />}
      </Row>
    ))}
  </Tree>
);

const nodes = (...names: string[]): Node[] => names.map((text) => ({ text }));

const DIM_FIELDS = ["缩写", "人口数量", "时区", "时间", "手机区号"];

export default function App() {
  return (
    <>
      <GlobalStyle />
      <Page>
        <MapSide>
          <FilterBar>
            <Field $dim $w={168}>
              请选择
              <Chevron color="#606266" />
            </Field>
            {DIM_FIELDS.map((f) => (
              <Field key={f} $dim $w={168}>
                {f}
              </Field>
            ))}
          </FilterBar>
          <Canvas>
            <World />
            <Tools />
            <Legend>
              <LegendMin>0</LegendMin>
              <LegendBar />
              <LegendMax>1500010000</LegendMax>
            </Legend>
          </Canvas>
        </MapSide>
        <Drawer>
          <Content>
            <Head>
              <Tab>基本信息</Tab>
              <HeadButtons>
                <Button $h={31} $w={67}>关 闭</Button>
                <Button $h={31} $primary>保存</Button>
              </HeadButtons>
            </Head>
            <TabLine>
              <TabActive />
            </TabLine>

            <Form $top={16}>
              <Field $w={225}>
                请选择过滤列
                <Chevron color="#c0c4cc" />
              </Field>
              <Field $w={225}>
                请选择过滤参数
                <Chevron color="#c0c4cc" />
              </Field>
              <Actions>
                <Button $h={36} $primary>添加</Button>
                <Button $h={36}>重置</Button>
              </Actions>
            </Form>
            <TreeView title="表格过滤" expandable nodes={nodes("第一语言", "宗教", "板块")} />

            <Form $top={33}>
              <Field $w={225}>列名</Field>
              <Field $w={225}>英文列名</Field>
              <Actions>
                <Button $h={35} $primary>添加</Button>
                <Button $h={35}>重置</Button>
              </Actions>
            </Form>
            <TreeView
              title="表头"
              active
              nodes={[
                { text: "国家", fixed: true },
                ...nodes("缩写", "人口数量", "时区", "时间", "手机区号", "第一语言", "第二语言", "宗教", "板块"),
              ]}
            />

            <Form $top={33}>
              <Field $w={225}>
                请选择
                <Chevron color="#c0c4cc" />
              </Field>
              <Actions $flush>
                <Button $h={36} $primary>添加</Button>
              </Actions>
            </Form>
            <TreeView
              title="地图默认显示"
              active
              nodes={nodes("缩写", "人口数量", "时间", "第一语言", "第二语言", "宗教")}
            />
          </Content>
          <ScrollTrack>
            <svg width="15" height="8" viewBox="0 0 15 8">
              <path d="M7.5 0 15 8H0z" fill="#8b8b8b" />
            </svg>
            <ScrollThumb />
          </ScrollTrack>
        </Drawer>
      </Page>
    </>
  );
}
